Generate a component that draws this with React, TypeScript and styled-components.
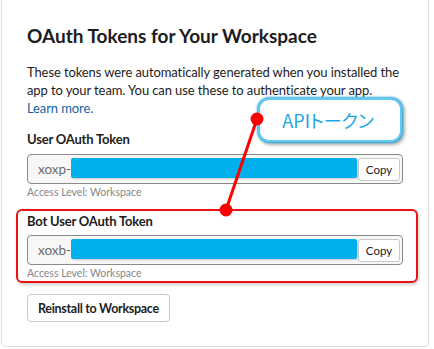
import React from "react";
import styled, { createGlobalStyle } from "styled-components";

const Global = createGlobalStyle`
  html, body { margin: 0; padding: 0; background: #ffffff; }
  body { font-family: Lato, "Noto Sans", sans-serif; color: #1d1c1d; }
`;

const Stage = styled.div`
  position: relative;
  width: 434px;
  height: 349px;
  overflow: hidden;
`;

const Card = styled.div`
  margin-left: 1px;
  width: 428px;
  box-sizing: border-box;
  border: 1px solid #dddddd;
  border-top: none;
  border-radius: 0 0 5px 5px;
  padding: 24px 25px 24px 25px;
  background: #ffffff;
`;

const Title = styled.h2`
  margin: 0;
  font-size: 19px;
  line-height: 24px;
  font-weight: 700;
  color: #1d1c1d;
`;

const Intro = styled.p`
  margin: 15px 0 0;
  font-size: 13px;
  letter-spacing: -0.1px;
  line-height: 18px;
  color: #1d1c1d;
`;

const Link = styled.a`
  color: #1264a3;
  text-decoration: none;
`;

const Section = styled.div<{ $highlight?: boolean }>`
  margin-top: ${(p) => (p.$highlight ? "10px" : "13px")};
  ${(p) =>
    p.$highlight
      ? `
    margin-left: -11px;
    margin-right: -15px;
    padding: 1px 13px 1px 9px;
    border: 2px solid #ee1111;
    border-radius: 6px;
    box-shadow: 1px 2px 3px rgba(0,0,0,0.18);
  `
      : ""}
`;

const Label = styled.div<{ $gap: number }>`
  font-size: 13px;
  letter-spacing: -0.2px;
  line-height: 19px;
  font-weight: 700;
  color: #1d1c1d;
  margin-bottom: ${(p) => p.$gap}px;
`;

const Field = styled.div`
  display: flex;
  align-items: flex-start;
  height: 30px;
  box-sizing: border-box;
  border: 1px solid #8a8a8a;
  border-radius: 4px;
  background: #f7f7f7;
  padding: 3px 2px 0 10px;
`;

const Prefix = styled.span`
  font-size: 13.5px;
  line-height: 20px;
  margin-top: 1px;
  color: #6b6a6b;
`;

const Mask = styled.div`
  flex: 1;
  height: 20px;
  background: #00b0ec;
  border-radius: 2px;
  box-shadow: 1px 1px 2px rgba(0, 0, 0, 0.2);
  margin-right: 1px;
`;

const CopyButton = styled.button`
  width: 42px;
  height: 23px;
  box-sizing: border-box;
  border: 1px solid #c8c8c8;
  border-radius: 3px;
  background: #ffffff;
  font-family: Lato, sans-serif;
  font-size: 11.5px;
  color: #1d1c1d;
  padding: 0;
`;

const Hint = styled.div`
  margin-top: 1px;
  font-size: 10.5px;
  line-height: 14px;
  color: #868686;
`;

const Reinstall = styled.button`
  display: block;
  margin-top: 11px;
  height: 28px;
  box-sizing: border-box;
  padding: 0 10px;
  border: 1px solid #c8c8c8;
  border-radius: 4px;
  background: #ffffff;
  font-family: Lato, sans-serif;
  font-size: 12.5px;
  letter-spacing: -0.3px;
  font-weight: 700;
  color: #1d1c1d;
`;

const Callout = styled.div`
  position: absolute;
  left: 258px;
  top: 98px;
  width: 144px;
  height: 44px;
  box-sizing: border-box;
  border: 2px solid #62c9ef;
  border-radius: 11px;
  background: #ffffff;
  box-shadow: 0 0 2px 1px #33aee2, 2px 2px 4px rgba(0, 0, 0, 0.45);
  display: flex;
  align-items: center;
  justify-content: center;
  font-family: "Noto Sans CJK JP", sans-serif;
  font-feature-settings: "palt";
  font-size: 18px;
  color: #1ba6e6;
  padding-right: 4px;
`;

const Pointer = styled.svg`
  position: absolute;
  left: 0;
  top: 0;
  pointer-events: none;
`;

type TokenProps = {
  label: string;
  prefix: string;
  highlight?: boolean;
};

function TokenSection({ label, prefix, highlight }: TokenProps) {
  return (
    <Section $highlight={highlight}>
      <Label $gap={highlight ? 4 : 5}>{label}</Label>
      <Field>
        <Prefix>{prefix}</Prefix>
        <Mask />
        <CopyButton>Copy</CopyButton>
      </Field>
      <Hint>Access Level: Workspace</Hint>
    </Section>
  );
}

export default function App() {
  return (
    <Stage>
      <Global />
      <Card>
        <Title>OAuth Tokens for Your Workspace</Title>
        <Intro>
          These tokens were automatically generated when you installed the app
          to your team. You can use these to authenticate your app.{" "}
          <Link href="#">Learn more.</Link>
        </Intro>
        <TokenSection label="User OAuth Token" prefix="xoxp-" />
        <TokenSection label="Bot User OAuth Token" prefix="xoxb-" highlight />
        <Reinstall>Reinstall to Workspace</Reinstall>
      </Card>
      <Callout>APIトークン</Callout>
      <Pointer width="434" height="349" viewBox="0 0 434 349">
        <line x1="257" y1="119" x2="226" y2="210" stroke="#ff0000" strokeWidth="3" />
        <circle cx="257" cy="119" r="6.5" fill="#ff0000" />
        <circle cx="226" cy="210" r="6.5" fill="#ff0000" />
      </Pointer>
    </Stage>
  );
}
